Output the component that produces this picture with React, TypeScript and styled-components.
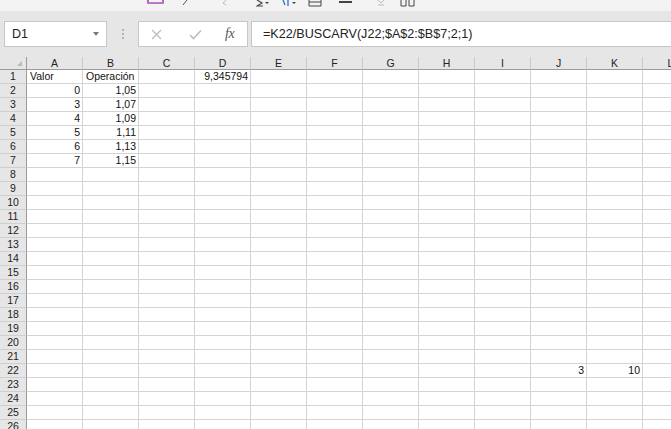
import styled, { createGlobalStyle } from 'styled-components';

const GlobalStyle = createGlobalStyle`
	html, body {
		margin: 0;
		padding: 0;
		background: #ffffff;
		overflow: hidden;
	}
`

const Page = styled.div`
	width: 671px;
	height: 429px;
	overflow: hidden;
	display: flex;
	flex-direction: column;
	font-family: "Liberation Sans", Arial, sans-serif;
`

const Ribbon = styled.div`
	height: 11px;
	flex: none;
	background: #f3f3f3;
	display: flex;
	align-items: flex-start;
	overflow: hidden;
`

const RibbonIcon = styled.svg<{ $left: number }>`
	flex: none;
	margin-left: ${props => props.$left}px;
	height: 7px;
`

const FormulaArea = styled.div`
	height: 46px;
	flex: none;
	background: #e6e6e6;
	display: flex;
	align-items: flex-start;
	padding-top: 10px;
	box-sizing: border-box;
`

const Box = styled.div`
	height: 26px;
	box-sizing: border-box;
	background: #ffffff;
	border: 1px solid #c6c6c6;
	display: flex;
	align-items: center;
	flex: none;
`

const NameBox = styled(Box)`
	margin-left: 4px;
	width: 103px;
	padding: 0 6px 0 7px;
	justify-content: space-between;
	font-size: 12.6px;
	color: #222;
`

const DropArrow = styled.span`
	width: 0;
	height: 0;
	border-left: 3.5px solid transparent;
	border-right: 3.5px solid transparent;
	border-top: 4px solid #777;
	margin-right: 1px;
`

const Grip = styled.div`
	width: 2px;
	height: 26px;
	margin: 0 14px 0 15px;
	display: flex;
	flex-direction: column;
	justify-content: center;
	gap: 2px;
	flex: none;
`

const GripDot = styled.span`
	width: 2px;
	height: 2px;
	background: #b3b3b3;
`

const FxBox = styled(Box)`
	width: 110px;
	padding-left: 12px;
	gap: 0;
`

const FxButton = styled.span<{ $w: number }>`
	width: ${props => props.$w}px;
	display: flex;
	align-items: center;
	flex: none;
`

const FxLabel = styled.span`
	font-family: "Liberation Serif", "Times New Roman", serif;
	font-style: italic;
	font-size: 14px;
	color: #555;
	letter-spacing: -0.5px;
`

const FormulaInput = styled(Box)`
	margin-left: 3px;
	flex: 1;
	border-right: none;
	padding-left: 11px;
	font-size: 12.6px;
	color: #222;
	white-space: nowrap;
`

const Sheet = styled.div`
	display: grid;
	grid-template-columns: 27px repeat(12, 56px);
	grid-auto-rows: 14px;
	grid-template-rows: 13px;
	font-size: 10.5px;
	color: #111;
`

const Corner = styled.div`
	background: #e6e6e6;
	border-right: 1px solid #9b9b9b;
	border-bottom: 1px solid #9b9b9b;
	box-sizing: border-box;
	display: flex;
	align-items: flex-end;
	justify-content: flex-end;
	padding: 0 4px 3px 0;
`

const CornerMark = styled.span`
	width: 0;
	height: 0;
	border-left: 5px solid transparent;
	border-bottom: 5px solid #b9b9b9;
`

const ColHead = styled.div`
	background: #e6e6e6;
	border-right: 1px solid #cbcbcb;
	border-bottom: 1px solid #9b9b9b;
	box-sizing: border-box;
	display: flex;
	align-items: center;
	justify-content: center;
	line-height: 12px;
	color: #222;
`

const RowHead = styled.div`
	background: #e6e6e6;
	border-right: 1px solid #9b9b9b;
	border-bottom: 1px solid #cfcfcf;
	box-sizing: border-box;
	display: flex;
	align-items: center;
	justify-content: center;
	line-height: 13px;
	color: #222;
`

const Cell = styled.div<{ $align?: 'left' | 'right' }>`
	border-right: 1px solid #d4d4d4;
	border-bottom: 1px solid #d4d4d4;
	box-sizing: border-box;
	padding: 0 2px 0 3px;
	line-height: 13px;
	text-align: ${props => props.$align || 'left'};
	white-space: nowrap;
	overflow: visible;
`

const columns = ['A', 'B', 'C', 'D', 'E', 'F', 'G', 'H', 'I', 'J', 'K', 'L'];

const data: Record<string, { v: string; align?: 'left' | 'right' }> = {
	A1: { v: 'Valor' },
	B1: { v: 'Operación' },
	D1: { v: '9,345794', align: 'right' },
	A2: { v: '0', align: 'right' },
	A3: { v: '3', align: 'right' },
	A4: { v: '4', align: 'right' },
	A5: { v: '5', align: 'right' },
	A6: { v: '6', align: 'right' },
	A7: { v: '7', align: 'right' },
	B2: { v: '1,05', align: 'right' },
	B3: { v: '1,07', align: 'right' },
	B4: { v: '1,09', align: 'right' },
	B5: { v: '1,11', align: 'right' },
	B6: { v: '1,13', align: 'right' },
	B7: { v: '1,15', align: 'right' },
	J22: { v: '3', align: 'right' },
	K22: { v: '10', align: 'right' },
};

const rows = Array.from({ length: 26 }, (_, i) => i + 1);

const App = () => {
	return (
		<Page>
			<GlobalStyle />
			<Ribbon>
				<RibbonIcon $left={147} width="17" viewBox="0 0 17 7">
					<rect x="1" y="-4" width="15" height="7" fill="none" stroke="#9b3aa6" strokeWidth="1.5" />
					<rect x="1" y="2" width="15" height="1.5" fill="#c07ccc" />
				</RibbonIcon>
				<RibbonIcon $left={18} width="6" viewBox="0 0 6 7">
					<path d="M5 0 L1 5" stroke="#555" strokeWidth="1" />
				</RibbonIcon>
				<RibbonIcon $left={34} width="6" viewBox="0 0 6 7">
					<path d="M4 0 L1 3 L4 5" fill="none" stroke="#bbb" strokeWidth="1" />
				</RibbonIcon>
				<RibbonIcon $left={28} width="14" viewBox="0 0 14 7">
					<path d="M1 0 L6 3 L1 6 L7 6" fill="none" stroke="#444" strokeWidth="1.2" />
					<path d="M9 2 L13 2 L11 4 Z" fill="#444" />
				</RibbonIcon>
				<RibbonIcon $left={12} width="16" viewBox="0 0 16 7">
					<path d="M1 0 L3 5 M6 0 L6 6" stroke="#2f6fc4" strokeWidth="1.3" />
					<path d="M10 2 L14 2 L12 4 Z" fill="#444" />
				</RibbonIcon>
				<RibbonIcon $left={10} width="14" viewBox="0 0 14 7">
					<path d="M1 0 L1 6 L13 6 L13 0 M1 2 L13 2" fill="none" stroke="#444" strokeWidth="1" />
				</RibbonIcon>
				<RibbonIcon $left={16} width="15" viewBox="0 0 15 7">
					<rect x="1" y="1" width="13" height="2" fill="#444" />
				</RibbonIcon>
				<RibbonIcon $left={24} width="9" viewBox="0 0 9 7">
					<path d="M1 0 L4 3 L7 0 M1 5 L7 5" fill="none" stroke="#bbb" strokeWidth="1" />
				</RibbonIcon>
				<RibbonIcon $left={14} width="15" viewBox="0 0 15 7">
					<path d="M1 0 L1 6 L6 6 L6 0 M9 0 L9 6 L14 6 L14 0" fill="none" stroke="#444" strokeWidth="1" />
				</RibbonIcon>
			</Ribbon>
			<FormulaArea>
				<NameBox>
					<span>D1</span>
					<DropArrow />
				</NameBox>
				<Grip>
					<GripDot />
					<GripDot />
					<GripDot />
				</Grip>
				<FxBox>
					<FxButton $w={38}>
						<svg width="11" height="11" viewBox="0 0 11 11">
							<path d="M1 1 L10 10 M10 1 L1 10" stroke="#bdbdbd" strokeWidth="1.3" />
						</svg>
					</FxButton>
					<FxButton $w={36}>
						<svg width="13" height="11" viewBox="0 0 13 11">
							<path d="M1 6 L4.5 9.5 L12 1.5" fill="none" stroke="#bdbdbd" strokeWidth="1.6" />
						</svg>
					</FxButton>
					<FxLabel>fx</FxLabel>
				</FxBox>
				<FormulaInput>=K22/BUSCARV(J22;$A$2:$B$7;2;1)</FormulaInput>
			</FormulaArea>
			<Sheet>
				<Corner>
					<CornerMark />
				</Corner>
				{columns.map(c => (
					<ColHead key={c}>{c}</ColHead>
				))}
				{rows.map(r => [
					<RowHead key={`h${r}`}>{r}</RowHead>,
					...columns.map(c => {
						const cell = data[`${c}${r}`];
						return (
							<Cell key={`${c}${r}`} $align={cell?.align}>
								{cell?.v}
							</Cell>
						);
					}),
				])}
			</Sheet>
		</Page>
	)
}

export default App;
